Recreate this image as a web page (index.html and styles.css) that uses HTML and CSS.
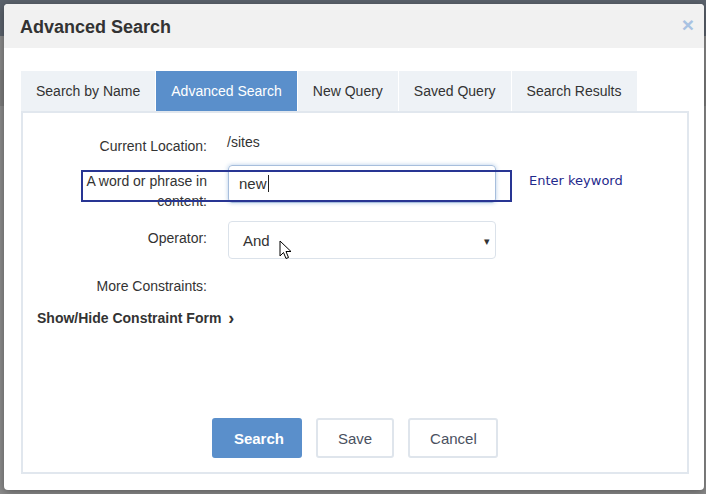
FILE: index.html
```html
<!DOCTYPE html>
<html lang="en">

<head>
    <meta charset="UTF-8" />
    <title>Advanced Search</title>
    <link rel="stylesheet" href="styles.css">
</head>

<body>
    <div class="modal">
        <div class="modal-header">
            <h2>Advanced Search</h2>
            <span class="close">&times;</span>
        </div>

        <div class="modal-body">
            <div class="tabs">
                <div class="tab">Search by Name</div>
                <div class="tab active">Advanced Search</div>
                <div class="tab">New Query</div>
                <div class="tab">Saved Query</div>
                <div class="tab">Search Results</div>
            </div>

            <div class="tab-panel">
                <div class="form-row row-location">
                    <label class="form-label">Current Location:</label>
                    <div class="form-value">/sites</div>
                </div>

                <div class="form-row row-keyword">
                    <label class="form-label">A word or phrase in content:</label>
                    <div class="form-control focused">new<span class="caret"></span></div>
                    <div class="highlight"></div>
                    <span class="hint">Enter keyword</span>
                </div>

                <div class="form-row row-operator">
                    <label class="form-label">Operator:</label>
                    <div class="form-control select">And<span class="arrow">&#9662;</span></div>
                    <svg class="pointer" width="14" height="21" viewBox="0 0 14 21">
                        <path d="M1 1 L1 16 L4.5 12.5 L7 18.5 L9.5 17.5 L7 11.5 L12 11.5 Z" fill="#fff" stroke="#000" stroke-width="1" stroke-linejoin="round" />
                    </svg>
                </div>

                <div class="form-row row-more">
                    <label class="form-label">More Constraints:</label>
                </div>

                <div class="toggle">Show/Hide Constraint Form <span class="chevron">&#8250;</span></div>

                <div class="actions">
                    <button class="btn btn-primary">Search</button>
                    <button class="btn">Save</button>
                    <button class="btn btn-wide">Cancel</button>
                </div>
            </div>
        </div>
    </div>
</body>

</html>
```

FILE: styles.css
```css
body {
    margin: 0;
    padding: 4px;
    height: 494px;
    box-sizing: border-box;
    font-family: "Liberation Sans", Arial, sans-serif;
    font-size: 14px;
    color: #333;
    background: linear-gradient(#5b626c 0, #5b626c 36px, #8a8a8a 36px, #8a8a8a 70px, #7c7c7c 70px, #7c7c7c 106px, #8b8b8b 106px);
    overflow: hidden;
}

.modal {
    width: 700px;
    height: 486px;
    background: #fff;
    border-radius: 4px;
    box-shadow: 0 2px 8px rgba(0, 0, 0, 0.35);
    display: flex;
    flex-direction: column;
    overflow: hidden;
}

.modal-header {
    height: 44px;
    flex: none;
    background: #f1f1f1;
    display: flex;
    align-items: center;
    justify-content: space-between;
    padding: 0 10px 0 16px;
}

.modal-header h2 {
    margin: 3px 0 0;
    font-size: 18px;
    font-weight: bold;
    color: #333;
}

.close {
    color: #a8c2e2;
    font-size: 21px;
    font-weight: bold;
    line-height: 1;
    margin-top: -4px;
}

.modal-body {
    flex: 1;
    display: flex;
    flex-direction: column;
    padding: 23px 15px 16px 17px;
}

.tabs {
    display: flex;
    gap: 1px;
}

.tab {
    height: 40px;
    line-height: 40px;
    padding: 0 15px;
    background: #eef2f6;
    color: #333;
}

.tab.active {
    background: #5a8fcb;
    color: #fff;
}

.tab-panel {
    flex: 1;
    border: 2px solid #e1e7ee;
    padding: 19px 14px 14px 14px;
    display: flex;
    flex-direction: column;
}

.form-row {
    display: flex;
    align-items: flex-start;
    gap: 21px;
    position: relative;
}

.form-label {
    width: 170px;
    flex: none;
    text-align: right;
    line-height: 20px;
    color: #333;
}

.row-location .form-label {
    padding-top: 4px;
}

.form-value {
    line-height: 20px;
    margin-left: -1px;
}

.row-keyword {
    margin-top: 9px;
}

.row-keyword .form-label {
    padding-top: 6px;
}

.row-operator {
    margin-top: 10px;
}

.row-operator .form-label {
    padding-top: 7px;
}

.row-more {
    margin-top: 17px;
}

.form-control {
    width: 268px;
    height: 38px;
    box-sizing: border-box;
    border: 1px solid #dbe2ea;
    border-radius: 4px;
    padding: 0 10px;
    font-size: 15px;
    line-height: 36px;
    color: #333;
    position: relative;
}

.form-control.focused {
    border-color: #a7bedc;
    box-shadow: 0 0 4px rgba(90, 143, 203, 0.45);
}

.caret {
    display: inline-block;
    width: 1px;
    height: 17px;
    background: #222;
    vertical-align: -3px;
    margin-left: 1px;
}

.form-control.select {
    padding-left: 14px;
    line-height: 38px;
}

.arrow {
    position: absolute;
    right: 5px;
    top: 0;
    font-size: 11px;
    color: #333;
}

.highlight {
    position: absolute;
    left: 44px;
    top: 5px;
    width: 427px;
    height: 28px;
    border: 2px solid #283593;
    pointer-events: none;
}

.hint {
    margin-left: 12px;
    line-height: 20px;
    margin-top: 6px;
    font-family: "DejaVu Sans", sans-serif;
    font-size: 13px;
    color: #1f2a8c;
}

.pointer {
    position: absolute;
    left: 242px;
    top: 19px;
}

.toggle {
    margin-top: 12px;
    line-height: 20px;
    font-weight: bold;
    color: #333;
}

.chevron {
    font-size: 18px;
    margin-left: 3px;
    vertical-align: -1px;
}

.actions {
    margin-top: auto;
    display: flex;
    justify-content: center;
    gap: 14px;
}

.btn {
    height: 40px;
    padding: 0 20px;
    font-family: "Liberation Sans", Arial, sans-serif;
    font-size: 15px;
    color: #4a5160;
    background: #fff;
    border: 2px solid #dfe5ec;
    border-radius: 3px;
}

.btn-wide {
    width: 90px;
}

.btn-primary {
    width: 90px;
    background: #5a8fcb;
    border-color: #5a8fcb;
    color: #fff;
    font-weight: bold;
}
```
